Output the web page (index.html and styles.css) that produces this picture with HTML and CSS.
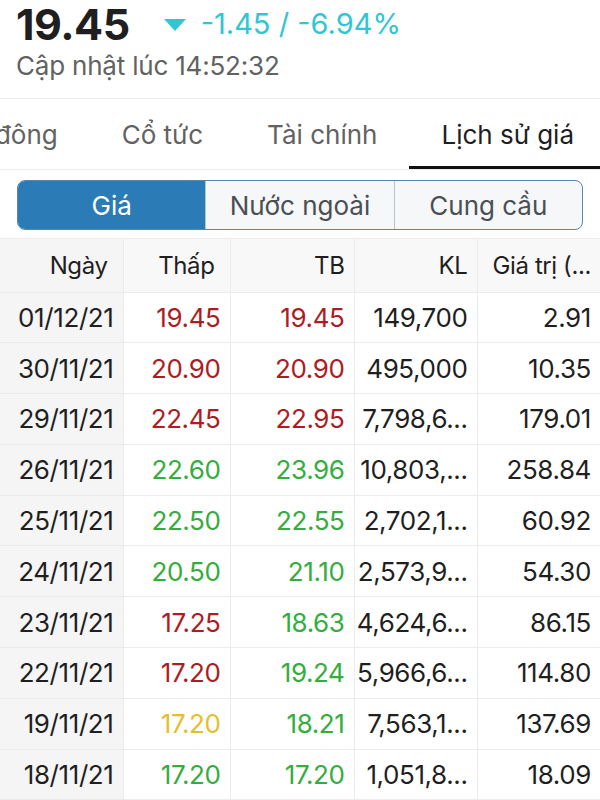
FILE: index.html
```html
<!DOCTYPE html>
<html lang="vi">
<head>
    <meta charset="UTF-8">
    <meta name="viewport" content="width=device-width, initial-scale=1.0">
    <title>Lịch sử giá</title>
    <link rel="stylesheet" href="styles.css">
</head>
<body>
    <div class="quote">
        <div class="price-line">
            <span class="price">19.45</span>
            <span class="arrow"></span>
            <span class="change">-1.45 / -6.94%</span>
        </div>
        <div class="updated">Cập nhật lúc 14:52:32</div>
    </div>

    <div class="tabs">
        <div class="tabs-track">
            <div class="tab">Cổ đông</div>
            <div class="tab">Cổ tức</div>
            <div class="tab">Tài chính</div>
            <div class="tab active">Lịch sử giá</div>
        </div>
    </div>

    <div class="segment-wrap">
        <div class="segment">
            <div class="segment-btn active">Giá</div>
            <div class="segment-btn">Nước ngoài</div>
            <div class="segment-btn">Cung cầu</div>
        </div>
    </div>

    <table class="history">
        <thead>
            <tr>
                <th class="date sort">Ngày</th>
                <th class="sort">Thấp</th>
                <th>TB</th>
                <th>KL</th>
                <th>Giá trị (...</th>
            </tr>
        </thead>
        <tbody>
            <tr><td class="date">01/12/21</td><td class="down">19.45</td><td class="down">19.45</td><td>149,700</td><td>2.91</td></tr>
            <tr><td class="date">30/11/21</td><td class="down">20.90</td><td class="down">20.90</td><td>495,000</td><td>10.35</td></tr>
            <tr><td class="date">29/11/21</td><td class="down">22.45</td><td class="down">22.95</td><td>7,798,6...</td><td>179.01</td></tr>
            <tr><td class="date">26/11/21</td><td class="up">22.60</td><td class="up">23.96</td><td>10,803,...</td><td>258.84</td></tr>
            <tr><td class="date">25/11/21</td><td class="up">22.50</td><td class="up">22.55</td><td>2,702,1...</td><td>60.92</td></tr>
            <tr><td class="date">24/11/21</td><td class="up">20.50</td><td class="up">21.10</td><td>2,573,9...</td><td>54.30</td></tr>
            <tr><td class="date">23/11/21</td><td class="down">17.25</td><td class="up">18.63</td><td>4,624,6...</td><td>86.15</td></tr>
            <tr><td class="date">22/11/21</td><td class="down">17.20</td><td class="up">19.24</td><td>5,966,6...</td><td>114.80</td></tr>
            <tr><td class="date">19/11/21</td><td class="ref">17.20</td><td class="up">18.21</td><td>7,563,1...</td><td>137.69</td></tr>
            <tr><td class="date">18/11/21</td><td class="up">17.20</td><td class="up">17.20</td><td>1,051,8...</td><td>18.09</td></tr>
        </tbody>
    </table>
</body>
</html>
```

FILE: styles.css
```css
:root {
    --text-color: #1f1f1f;
    --muted-color: #626262;
    --line-color: #ececec;
    --cyan-color: #30c6d3;
    --up-color: #33ad3d;
    --down-color: #ad1c22;
    --ref-color: #e4bf2c;
    --segment-color: #2b7cb6;
    --segment-border: #5b86a6;
}

* {
    margin: 0;
    padding: 0;
    box-sizing: border-box;
}

body {
    background: #ffffff;
    color: var(--text-color);
    font-family: Inter, "Noto Sans", sans-serif;
    width: 600px;
    overflow: hidden;
}

.quote {
    padding: 0 16px 14px;
    border-bottom: 1px solid var(--line-color);
}

.price-line {
    display: flex;
    align-items: center;
    height: 48px;
}

.price {
    font-size: 43px;
    font-weight: 700;
    line-height: 1;
    letter-spacing: -0.5px;
}

.arrow {
    width: 0;
    height: 0;
    border-left: 11px solid transparent;
    border-right: 11px solid transparent;
    border-top: 12px solid var(--cyan-color);
    margin: 2px 15px 0 34px;
}

.change {
    font-size: 29px;
    line-height: 1.2;
    color: var(--cyan-color);
}

.updated {
    font-size: 26px;
    color: var(--muted-color);
    line-height: 36px;
    letter-spacing: -0.2px;
}

.tabs {
    height: 71px;
    overflow: hidden;
    border-bottom: 1px solid var(--line-color);
}

.tabs-track {
    display: flex;
    height: 100%;
    margin-left: -79px;
}

.tab {
    padding: 3px 32px 0;
    font-size: 26px;
    color: var(--muted-color);
    display: flex;
    align-items: center;
    white-space: nowrap;
    border-bottom: 3px solid transparent;
}

.tab.active {
    color: var(--text-color);
    border-bottom-color: #111111;
}

.segment-wrap {
    padding: 10px 17px 8px;
    border-bottom: 1px solid var(--line-color);
}

.segment {
    display: flex;
    height: 50px;
    border: 1.5px solid var(--segment-border);
    border-radius: 8px;
    overflow: hidden;
    background: #f6f7f9;
}

.segment-btn {
    flex: 1;
    display: flex;
    align-items: center;
    justify-content: center;
    font-size: 26px;
    color: #4a4f55;
    border-left: 1px solid #b4c4d0;
}

.segment-btn:first-child {
    border-left: none;
}

.segment-btn.active {
    background: var(--segment-color);
    color: #ffffff;
}

.history {
    width: 600px;
    border-collapse: collapse;
    table-layout: fixed;
}

.history th,
.history td {
    text-align: right;
    padding: 0 9px 0 0;
    white-space: nowrap;
    overflow: hidden;
    letter-spacing: -0.4px;
    border-left: 1px solid var(--line-color);
    border-bottom: 1px solid var(--line-color);
}

.history th {
    height: 53px;
    font-size: 24px;
    font-weight: 400;
    background: #f8f8f8;
}

.history th.sort {
    padding-right: 15px;
}

.history td {
    height: 50.8px;
    font-size: 26px;
}

.history th:first-child,
.history td:first-child {
    border-left: none;
    width: 123px;
}

.history th:nth-child(2),
.history td:nth-child(2) {
    width: 107px;
}

.history th:nth-child(3),
.history td:nth-child(3) {
    width: 124px;
}

.history .date {
    background: #f5f5f5;
}

.history td.up {
    color: var(--up-color);
}

.history td.down {
    color: var(--down-color);
}

.history td.ref {
    color: var(--ref-color);
}
```
